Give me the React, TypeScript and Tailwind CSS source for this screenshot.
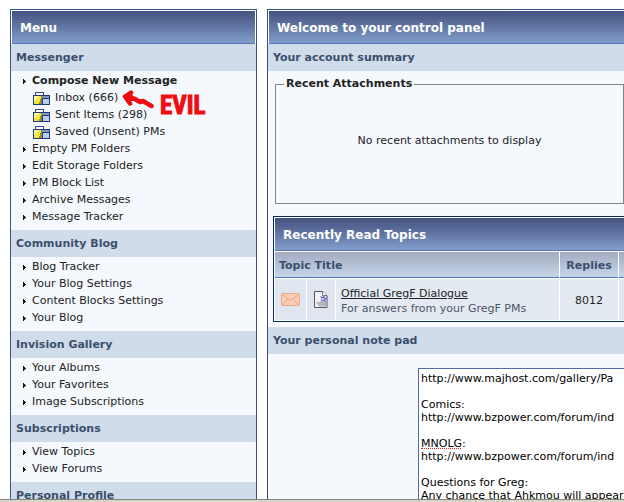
import React from "react";

interface MenuItem {
  label: string;
  bold?: boolean;
  folder?: boolean;
}

interface MenuSection {
  title: string;
  items: MenuItem[];
}

const MENU: MenuSection[] = [
  {
    title: "Messenger",
    items: [
      { label: "Compose New Message", bold: true },
      { label: "Inbox (666)", folder: true },
      { label: "Sent Items (298)", folder: true },
      { label: "Saved (Unsent) PMs", folder: true },
      { label: "Empty PM Folders" },
      { label: "Edit Storage Folders" },
      { label: "PM Block List" },
      { label: "Archive Messages" },
      { label: "Message Tracker" },
    ],
  },
  {
    title: "Community Blog",
    items: [{ label: "Blog Tracker" }, { label: "Your Blog Settings" }, { label: "Content Blocks Settings" }, { label: "Your Blog" }],
  },
  {
    title: "Invision Gallery",
    items: [{ label: "Your Albums" }, { label: "Your Favorites" }, { label: "Image Subscriptions" }],
  },
  {
    title: "Subscriptions",
    items: [{ label: "View Topics" }, { label: "View Forums" }],
  },
  { title: "Personal Profile", items: [] },
];

const NOTES = `http://www.majhost.com/gallery/Pa

Comics:
http://www.bzpower.com/forum/ind

MNOLG:
http://www.bzpower.com/forum/ind

Questions for Greg:
Any chance that Ahkmou will appear`;

const Bullet: React.FC = () => (
  <svg className="h-[5px] w-[4px] shrink-0" viewBox="0 0 4 5" shapeRendering="crispEdges">
    <path d="M0 0h1v1h1v1h1v1h-1v1h-1v1h-1z" fill="#111" />
  </svg>
);

const FolderIcon: React.FC = () => (
  <svg className="h-[13px] w-[17px] shrink-0" viewBox="0 0 17 13" shapeRendering="crispEdges">
    <path d="M2 0h9v4H2z" fill="#3a4a86" />
    <path d="M3 1h7v3H3z" fill="#fff" />
    <path d="M0 3h17v10H0z" fill="#1f3a7a" />
    <path d="M1 4h15v2H1z" fill="#8796c0" />
    <path d="M1 4h8v8H1z" fill="#f0e63e" />
    <path d="M1 4h5l-5 6z" fill="#fcf9a8" />
    <path d="M8 4h1v8H6v-2h1V7h1z" fill="#8f8a3c" />
    <path d="M9 6h8v7H9z" fill="#1f3a7a" />
    <path d="M10 7h6v5h-6z" fill="#b9cdf5" />
  </svg>
);

const EnvelopeIcon: React.FC = () => (
  <svg className="h-[13px] w-[19px]" viewBox="0 0 19 13">
    <rect x="0.5" y="0.5" width="18" height="12" rx="1" fill="#fbcdb5" stroke="#eda98b" />
    <path d="M1 1.5l8.5 6 8.5-6M1 12l6-5.800M18 12l-6-5.800" fill="none" stroke="#eba285" />
  </svg>
);

const PageIcon: React.FC = () => (
  <svg className="h-[17px] w-[14px]" viewBox="0 0 14 17">
    <path d="M0.500 0.500h8l4.500 4v12h-12.500z" fill="#f3f3f5" stroke="#55565c" />
    <path d="M2 11l3 4.500h7.500v-5z" fill="#b4b5bc" />
    <path d="M8.500 0.500v4h4.500" fill="#fff" stroke="#777a88" />
    <path d="M6 5l2 1 2-2 1 2.500 2.500.5-2 1.500.5 3-2.500-1.500-3 1 1-2.500z" fill="#7674cf" />
    <path d="M8 7h2v2H8z" fill="#c9c8f5" />
  </svg>
);

const TitleBar: React.FC<{ children: React.ReactNode }> = ({ children }) => (
  <h1 className="mx-px flex h-[33px] items-center border-b border-[#5176b5] bg-linear-to-b from-[#44527f] to-[#829dcc] pt-[2px] pl-2 text-[12px] font-bold text-white">
    {children}
  </h1>
);

const SubTitle: React.FC<{ children: React.ReactNode }> = ({ children }) => (
  <h2 className="flex h-[27px] shrink-0 items-center bg-[#d1dceb] px-[5px] pt-[2px] text-[11px] font-bold text-[#3a4f6c]">{children}</h2>
);

const EvilNote: React.FC = () => (
  <div className="absolute top-0 left-[111px] flex items-start">
    <svg className="h-[20px] w-[32px] shrink-0" viewBox="0 0 32 20">
      <path d="M9 2.500L3 6.500l5 7M4 6.500l9 2.500 5 3 3-1 8.500 5" fill="none" stroke="#f00d12" strokeWidth="4.500" strokeLinecap="round" strokeLinejoin="round" />
      <path d="M3 6l7-2 2 4-4 4z" fill="#f00d12" />
    </svg>
    <span className="ml-[6px] text-[25px] leading-[32px] font-bold text-[#f00d12] [-webkit-text-stroke:1px_#f00d12] [font-family:Impact,'Liberation_Sans_Narrow','Roboto_Condensed',sans-serif]">
      EVIL
    </span>
  </div>
);

const MenuRow: React.FC<{ item: MenuItem }> = ({ item }) => (
  <li className={`relative flex h-[17px] items-center ${item.folder ? "gap-[5px] pl-[22px]" : "gap-[5px] pl-3"}`}>
    {item.folder ? <FolderIcon /> : <Bullet />}
    <a href="#" className={item.bold ? "font-bold" : ""}>
      {item.label}
    </a>
    {item.label.startsWith("Inbox") && <EvilNote />}
  </li>
);

const Sidebar: React.FC = () => (
  <nav className="w-[247px] shrink-0 overflow-hidden border border-b-0 border-[#345487] bg-[#f5f9fd]">
    <div className="bg-white pt-px">
      <TitleBar>Menu</TitleBar>
    </div>
    {MENU.map((section) => (
      <section key={section.title}>
        <SubTitle>{section.title}</SubTitle>
        <ul className="pt-[2px] pb-1">
          {section.items.map((item) => (
            <MenuRow key={item.label} item={item} />
          ))}
        </ul>
      </section>
    ))}
  </nav>
);

const TopicsTable: React.FC = () => (
  <div className="border border-[#072a66] bg-white pt-px">
    <TitleBar>Recently Read Topics</TitleBar>
    <table className="w-full table-fixed border-separate border-spacing-px">
      <colgroup>
        <col className="w-[31px]" />
        <col className="w-[28px]" />
        <col className="w-[223px]" />
        <col className="w-[58px]" />
        <col />
      </colgroup>
      <thead>
        <tr className="text-left text-[11px] text-[#3a4f6c]">
          <th colSpan={3} className="h-[26px] border-b border-[#5176b5] bg-linear-to-b from-[#a5abc0] to-[#c5d5ea] px-1 pt-[3px]">
            Topic Title
          </th>
          <th className="border-b border-[#5176b5] bg-linear-to-b from-[#a5abc0] to-[#c5d5ea] pt-[3px] text-center">Replies</th>
          <th className="border-b border-[#5176b5] bg-linear-to-b from-[#a5abc0] to-[#c5d5ea]" />
        </tr>
      </thead>
      <tbody>
        <tr>
          <td className="h-[41px] bg-[#dfe6ef]">
            <div className="flex justify-center">
              <EnvelopeIcon />
            </div>
          </td>
          <td className="bg-[#dfe6ef]">
            <div className="flex justify-center">
              <PageIcon />
            </div>
          </td>
          <td className="bg-[#e4eaf2] pt-[2px] pl-[5px] leading-[15px] whitespace-nowrap">
            <a href="#" className="block underline">
              Official GregF Dialogue
            </a>
            <span className="block text-[#4c5766]">For answers from your GregF PMs</span>
          </td>
          <td className="bg-[#e4eaf2] pt-[3px] text-center">8012</td>
          <td className="bg-[#dfe6ef]" />
        </tr>
      </tbody>
    </table>
  </div>
);

const ControlPanel: React.FC = () => (
  <main className="flex w-[700px] shrink-0 flex-col border border-b-0 border-[#345487] bg-[#f5f9fd]">
    <div className="bg-white pt-px">
      <TitleBar>Welcome to your control panel</TitleBar>
    </div>
    <SubTitle>Your account summary</SubTitle>
    <div className="p-[5px]">
      <fieldset className="mx-[2px] mb-3 h-[128px] w-[349px] border border-[#808288] px-2">
        <legend className="px-[2px] text-[11px] leading-4 font-bold">Recent Attachments</legend>
        <p className="pt-[41px] text-center">No recent attachments to display</p>
      </fieldset>
      <TopicsTable />
    </div>
    <SubTitle>
      <label htmlFor="notepad">Your personal note pad</label>
    </SubTitle>
    <div className="relative ml-[150px] pt-[14px]">
      <textarea
        id="notepad"
        spellCheck={false}
        defaultValue={NOTES}
        className="block h-[200px] w-[400px] resize-none overflow-hidden border border-[#4f6fa5] bg-white px-[2px] py-[3px] leading-[13px] text-black outline-none"
      />
      {/* spell checker mark under MNOLG */}
      <span className="absolute top-[94px] left-[3px] w-[40px] border-b border-dotted border-[#e0202c]" />
    </div>
  </main>
);

export default function App() {
  return (
    <div className="flex h-screen flex-col overflow-hidden bg-white text-[11px] text-[#222] [font-family:Verdana,'DejaVu_Sans',sans-serif]">
      <div className="flex min-h-0 flex-1 gap-[10px] overflow-hidden px-[10px] pt-[9px]">
        <Sidebar />
        <ControlPanel />
      </div>
      <footer className="h-[3px] shrink-0 border-t border-[#85857c] bg-[#d6d5c8]" />
    </div>
  );
}
